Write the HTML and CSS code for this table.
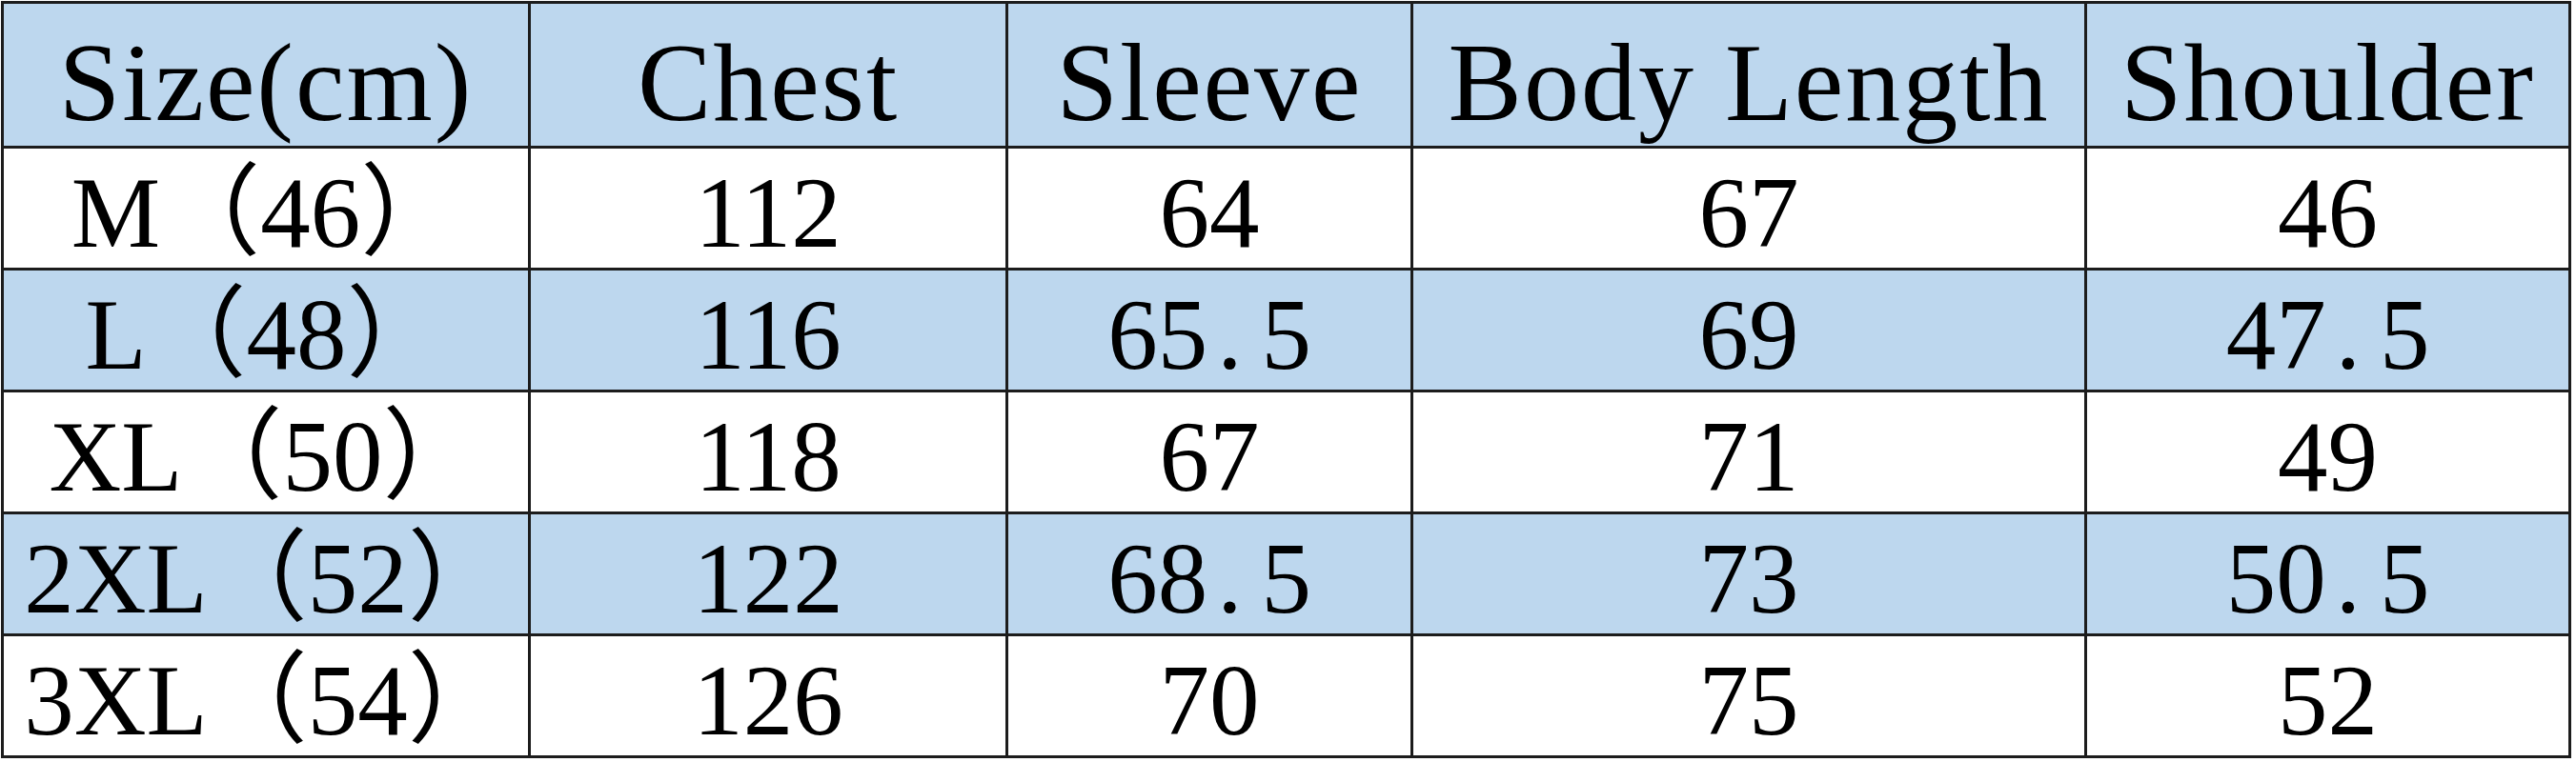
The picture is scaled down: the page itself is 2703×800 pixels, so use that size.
FILE: index.html
```html
<!DOCTYPE html>
<html>
	<head>
		<title>Size Chart</title>
		<link rel="stylesheet" href="styles.css">
	</head>
	<body>
		<table class="chart">
			<colgroup>
				<col class="c-size">
				<col class="c-chest">
				<col class="c-sleeve">
				<col class="c-length">
				<col class="c-shoulder">
			</colgroup>
			<tr class="head">
				<th>Size(cm)</th>
				<th>Chest</th>
				<th>Sleeve</th>
				<th>Body Length</th>
				<th>Shoulder</th>
			</tr>
			<tr>
				<td>M（46）</td>
				<td>112</td>
				<td>64</td>
				<td>67</td>
				<td>46</td>
			</tr>
			<tr class="blue">
				<td>L（48）</td>
				<td>116</td>
				<td>65<span class="dot">.</span>5</td>
				<td>69</td>
				<td>47<span class="dot">.</span>5</td>
			</tr>
			<tr>
				<td>XL（50）</td>
				<td>118</td>
				<td>67</td>
				<td>71</td>
				<td>49</td>
			</tr>
			<tr class="blue">
				<td>2XL（52）</td>
				<td>122</td>
				<td>68<span class="dot">.</span>5</td>
				<td>73</td>
				<td>50<span class="dot">.</span>5</td>
			</tr>
			<tr>
				<td>3XL（54）</td>
				<td>126</td>
				<td>70</td>
				<td>75</td>
				<td>52</td>
			</tr>
		</table>
	</body>
</html>
```

FILE: styles.css
```css
html, body { margin: 0; padding: 0; background: #fff; }

.chart {
	border-collapse: collapse;
	table-layout: fixed;
	width: 2697px;
	margin: 1px 0 0 1px;
	font-family: "Liberation Serif", "Noto Sans CJK SC", serif;
	color: #000;
}

.c-size { width: 553px; }
.c-chest { width: 501px; }
.c-sleeve { width: 425px; }
.c-length { width: 707px; }
.c-shoulder { width: 508px; }

.chart th, .chart td {
	border: 3px solid #1c1c1c;
	padding: 0;
	text-align: center;
	vertical-align: bottom;
	line-height: 1.1;
	white-space: nowrap;
}

.chart tr { height: 128px; }
.chart tr.head { height: 152px; }

.chart th {
	font-weight: normal;
	font-size: 116px;
	letter-spacing: 2px;
	padding-bottom: 1px;
	background-color: #bdd7ee;
}

.chart td {
	font-size: 105px;
	padding-bottom: 0;
	margin-bottom: -5px;
}

.chart td .dot { letter-spacing: 20px; margin-left: 10px; }

.chart tr.blue td { background-color: #bdd7ee; }
```
